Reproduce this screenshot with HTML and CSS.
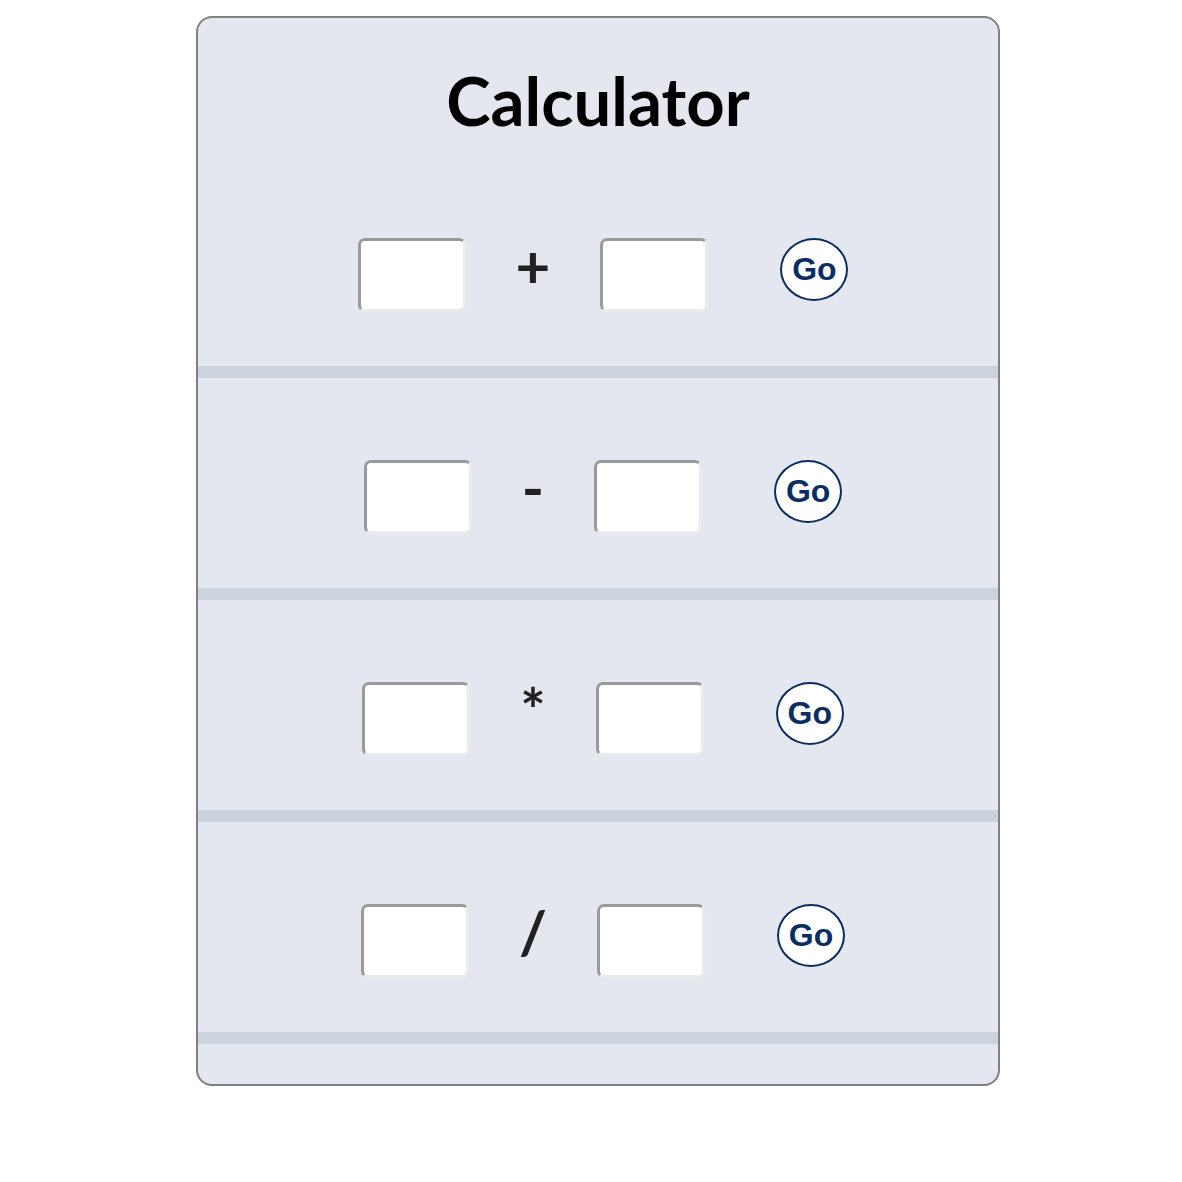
FILE: index.html
```html
<!DOCTYPE html>
<html lang="en">
<head>
<meta charset="utf-8">
<title>Calculator</title>
<link rel="stylesheet" href="styles.css">
</head>
<body>
<div class="page">
  <div class="card">
    <h1 class="title">Calculator</h1>
    <div class="row">
      <input class="num" type="text">
      <span class="op">+</span>
      <input class="num" type="text">
      <button class="go" type="button">Go</button>
    </div>
    <div class="row">
      <input class="num" type="text">
      <span class="op">-</span>
      <input class="num" type="text">
      <button class="go" type="button">Go</button>
    </div>
    <div class="row">
      <input class="num" type="text">
      <span class="op">*</span>
      <input class="num" type="text">
      <button class="go" type="button">Go</button>
    </div>
    <div class="row">
      <input class="num" type="text">
      <span class="op">/</span>
      <input class="num" type="text">
      <button class="go" type="button">Go</button>
    </div>
  </div>
</div>
</body>
</html>
```

FILE: styles.css
```css
html, body {
  margin: 0;
  padding: 0;
  background: #ffffff;
}

.page {
  padding: 16px 0 0 196px;
}

.card {
  box-sizing: border-box;
  width: 804px;
  background: #e4e7ef;
  border: 2px solid #808080;
  border-radius: 16px;
  padding-bottom: 40px;
}

.title {
  margin: 0;
  padding: 49px 0 22px;
  font-family: "Lato", "Liberation Sans", sans-serif;
  font-weight: 700;
  font-size: 67px;
  line-height: 67px;
  text-align: center;
  color: #000000;
}

.row {
  box-sizing: border-box;
  height: 222px;
  padding: 82px 0 0 10px;
  border-bottom: 12px solid #ccd3df;
  display: flex;
  justify-content: center;
  align-items: flex-start;
}

.num {
  box-sizing: border-box;
  width: 108px;
  height: 74px;
  margin: 0;
  padding: 0;
  background: #ffffff;
  border: 3px solid;
  border-color: #9a9a9a #ebebeb #ebebeb #9a9a9a;
  border-radius: 7px;
  outline: none;
}

.op {
  margin: -3px 50px 0;
  font-family: "Lato", "Liberation Sans", sans-serif;
  font-weight: 700;
  font-size: 60px;
  line-height: 60px;
  color: #222222;
}

.go {
  box-sizing: border-box;
  width: 68px;
  height: 63px;
  margin: 0 0 0 72px;
  padding: 0;
  background: #ffffff;
  border: 2px solid #0c2c60;
  border-radius: 50%;
  font-family: "Liberation Sans", Arial, sans-serif;
  font-weight: 700;
  font-size: 32px;
  color: #0b2d63;
  cursor: pointer;
}
```
